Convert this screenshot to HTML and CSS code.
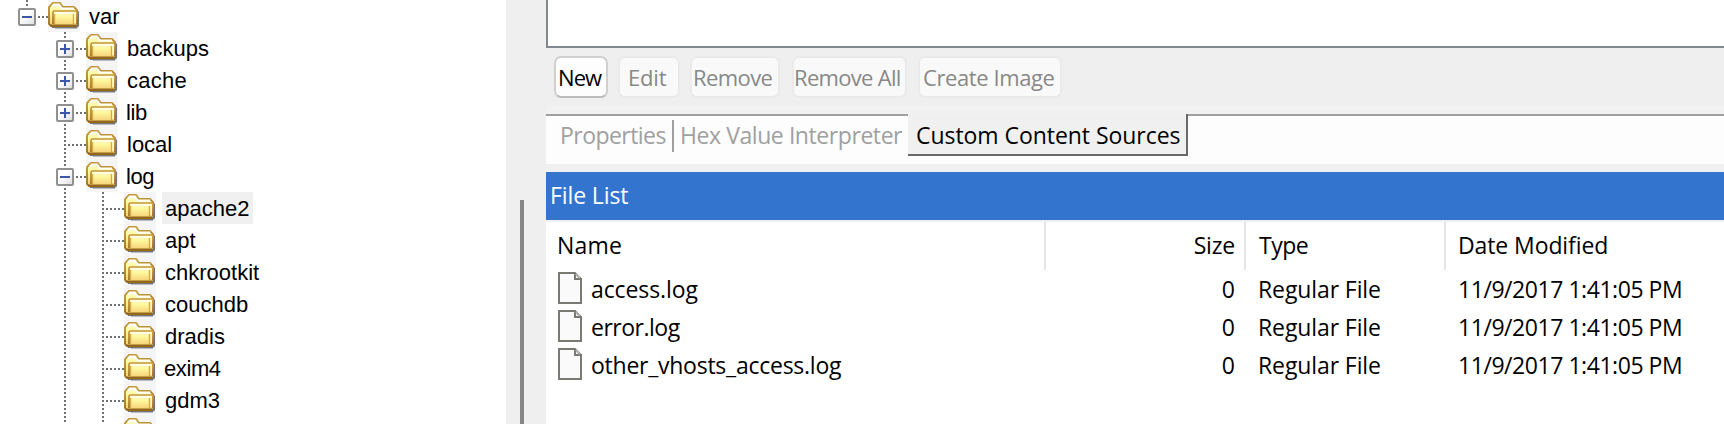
FILE: index.html
```html
<!DOCTYPE html>
<html lang="en">
<head>
<meta charset="utf-8">
<title>File List</title>
<link rel="stylesheet" href="styles.css">
</head>
<body>
<svg class="defs" width="0" height="0">
  <defs>
    <linearGradient id="gold" x1="0" y1="0" x2="0" y2="1"><stop offset="0" stop-color="#fffdd0"/><stop offset=".4" stop-color="#fff69b"/><stop offset="1" stop-color="#f3cc76"/></linearGradient>
    <linearGradient id="rim" x1="0" y1="0" x2="0" y2="1"><stop offset="0" stop-color="#c39a3c"/><stop offset="1" stop-color="#956a1c"/></linearGradient>
    <linearGradient id="knob" x1="0" y1="0" x2="1" y2="1"><stop offset=".4" stop-color="#fff"/><stop offset="1" stop-color="#dcdcdc"/></linearGradient>
    <symbol id="folder" viewBox="0 0 32 32">
      <path d="M4 26v2h25l2-2V12l-2-2z" fill="#777"/>
      <path d="M7 28.500h22" stroke="#bbb" stroke-width="1"/>
      <path d="M1 24V7l2-2 2-2h7l3 4h11l3 3v14l-2 2H3z" fill="url(#gold)" stroke="url(#rim)" stroke-width="1.800"/>
      <path d="M4 6.500l2-2h5l3 4h12" fill="none" stroke="#fff" stroke-width="1.800"/>
      <path d="M5 24V12l1-1h22l1 1v12l-2 2H6z" fill="url(#gold)"/>
      <path d="M5 24V12l1-1h22l1 1v12" fill="none" stroke="url(#rim)" stroke-width="1.700"/>
      <path d="M6.500 14v10M25.500 14v10" stroke="#dba842" stroke-width="1.400"/>
      <path d="M7 13h20" stroke="#fffde8" stroke-width="1.600"/>
      <path d="M27.200 14v9" stroke="#fffbc0" stroke-width="1.600"/>
      <path d="M3 25.500h25" stroke="#94681a" stroke-width="2"/>
    </symbol>
    <symbol id="plus" viewBox="0 0 18 18"><rect x="1" y="1" width="16" height="16" rx="1" fill="url(#knob)" stroke="#919191" stroke-width="2"/><path d="M4 9h10M9 4v10" stroke="#3c57a8" stroke-width="2"/></symbol>
    <symbol id="minus" viewBox="0 0 18 18"><rect x="1" y="1" width="16" height="16" rx="1" fill="url(#knob)" stroke="#919191" stroke-width="2"/><path d="M4 9h10" stroke="#3c57a8" stroke-width="2"/></symbol>
    <symbol id="page" viewBox="0 0 24 32"><path d="M1 1h16l6 6v24H1z" fill="#fafafa"/><path d="M17 1H1v30h22V7h-6V1l6 6" fill="none" stroke="#7a7a75" stroke-width="2"/><path d="M18 0h6v6z" fill="#fff"/><path d="M18 2l4 4" stroke="#b5b5b0" stroke-width="2"/></symbol>
  </defs>
</svg>
<div class="app">
  <nav class="tree">
    <div class="node"><span class="cell start"><i class="v top"></i><i class="h right"></i><svg class="box"><use href="#minus"/></svg></span><svg class="folder"><use href="#folder"/></svg><span class="label">var</span></div>
    <div class="node"><span class="pad"></span><span class="cell"><i class="v"></i><i class="h right"></i><svg class="box"><use href="#plus"/></svg></span><svg class="folder"><use href="#folder"/></svg><span class="label">backups</span></div>
    <div class="node"><span class="pad"></span><span class="cell"><i class="v"></i><i class="h right"></i><svg class="box"><use href="#plus"/></svg></span><svg class="folder"><use href="#folder"/></svg><span class="label wide">cache</span></div>
    <div class="node"><span class="pad"></span><span class="cell"><i class="v"></i><i class="h right"></i><svg class="box"><use href="#plus"/></svg></span><svg class="folder"><use href="#folder"/></svg><span class="label tight">lib</span></div>
    <div class="node"><span class="pad"></span><span class="cell"><i class="v"></i><i class="h"></i></span><svg class="folder"><use href="#folder"/></svg><span class="label">local</span></div>
    <div class="node"><span class="pad"></span><span class="cell"><i class="v"></i><i class="h right"></i><svg class="box"><use href="#minus"/></svg></span><svg class="folder"><use href="#folder"/></svg><span class="label tight">log</span></div>
    <div class="node"><span class="pad"></span><span class="cell"><i class="v"></i></span><span class="cell"><i class="v"></i><i class="h"></i></span><svg class="folder"><use href="#folder"/></svg><span class="label selected">apache2</span></div>
    <div class="node"><span class="pad"></span><span class="cell"><i class="v"></i></span><span class="cell"><i class="v"></i><i class="h"></i></span><svg class="folder"><use href="#folder"/></svg><span class="label">apt</span></div>
    <div class="node"><span class="pad"></span><span class="cell"><i class="v"></i></span><span class="cell"><i class="v"></i><i class="h"></i></span><svg class="folder"><use href="#folder"/></svg><span class="label">chkrootkit</span></div>
    <div class="node"><span class="pad"></span><span class="cell"><i class="v"></i></span><span class="cell"><i class="v"></i><i class="h"></i></span><svg class="folder"><use href="#folder"/></svg><span class="label">couchdb</span></div>
    <div class="node"><span class="pad"></span><span class="cell"><i class="v"></i></span><span class="cell"><i class="v"></i><i class="h"></i></span><svg class="folder"><use href="#folder"/></svg><span class="label">dradis</span></div>
    <div class="node"><span class="pad"></span><span class="cell"><i class="v"></i></span><span class="cell"><i class="v"></i><i class="h"></i></span><svg class="folder"><use href="#folder"/></svg><span class="label tight">exim4</span></div>
    <div class="node"><span class="pad"></span><span class="cell"><i class="v"></i></span><span class="cell"><i class="v"></i><i class="h"></i></span><svg class="folder"><use href="#folder"/></svg><span class="label">gdm3</span></div>
    <div class="node"><span class="pad"></span><span class="cell"><i class="v"></i></span><span class="cell"><i class="v"></i><i class="h"></i></span><svg class="folder"><use href="#folder"/></svg><span class="label">glusterfs</span></div>
  </nav>
  <div class="scrollbar"><div class="thumb"></div></div>
  <main class="main">
    <div class="sources"></div>
    <div class="toolbar">
      <button class="btn new">New</button>
      <button class="btn edit" disabled>Edit</button>
      <button class="btn remove" disabled>Remove</button>
      <button class="btn remove-all" disabled>Remove All</button>
      <button class="btn create" disabled>Create Image</button>
    </div>
    <div class="tabs">
      <span class="tab props">Properties</span>
      <span class="tab hex">Hex Value Interpreter</span>
      <span class="tab active">Custom Content Sources</span>
      <span class="tab rest"></span>
    </div>
    <div class="title">File List</div>
    <div class="row head"><span class="name">Name</span><span class="size">Size</span><span class="type">Type</span><span class="date">Date Modified</span></div>
    <div class="row"><span class="name"><svg class="page"><use href="#page"/></svg><span class="f1">access.log</span></span><span class="size">0</span><span class="type">Regular File</span><span class="date">11/9/2017 1:41:05 PM</span></div>
    <div class="row"><span class="name"><svg class="page"><use href="#page"/></svg><span class="f2">error.log</span></span><span class="size">0</span><span class="type">Regular File</span><span class="date">11/9/2017 1:41:05 PM</span></div>
    <div class="row"><span class="name"><svg class="page"><use href="#page"/></svg><span class="f3">other_vhosts_access.log</span></span><span class="size">0</span><span class="type">Regular File</span><span class="date">11/9/2017 1:41:05 PM</span></div>
    <div class="fill"></div>
  </main>
</div>
</body>
</html>
```

FILE: styles.css
```css
* { box-sizing: border-box; }
body { margin: 0; overflow: hidden; background: #fff; color: #000; font: 23px "Open Sans", sans-serif; }
.defs { position: absolute; }
.app { display: flex; width: 1724px; height: 424px; overflow: hidden; white-space: nowrap; }

/* Directory tree */
.tree { width: 506px; height: 424px; overflow: hidden; font: 22px/34px "Liberation Sans", Arial, sans-serif; }
.node { display: flex; height: 32px; }
.pad { width: 48px; }
.cell { position: relative; width: 38px; height: 32px; }
.cell.start { width: 38px; margin-left: 10px; }
.v, .h { position: absolute; }
.v { left: 16px; top: 0; width: 2px; height: 32px; background: repeating-linear-gradient(#707070 0 2px, transparent 2px 4px); }
.v.top { height: 8px; }
.h { left: 16px; top: 16px; width: 22px; height: 2px; background: repeating-linear-gradient(90deg, #707070 0 2px, transparent 2px 4px); }
.h.right { left: 28px; width: 10px; }
.box { position: absolute; left: 8px; top: 8px; width: 18px; height: 18px; background: #fff; }
.folder { width: 32px; height: 32px; background: #f5f5f5; }
.label { height: 32px; margin-left: 6px; padding: 0 4px 0 3px; letter-spacing: 0; }
.tight { padding-left: 2px; letter-spacing: -0.4px; }
.wide { letter-spacing: .25px; }
.selected { background: #f0f0f0; }

.scrollbar { width: 40px; padding: 200px 0 0 14px; background: #efefef; }
.thumb { width: 4px; height: 224px; background: #868686; }

/* Right pane */
.main { display: flex; flex-direction: column; width: 1178px; height: 424px; background: #f0f0f0; }
.sources { height: 48px; background: #fff; border: solid #828790; border-width: 0 0 2px 2px; }
.toolbar { display: flex; height: 66px; padding: 8px; background: linear-gradient(#efefef 58px, #f1f1f1 58px); }
.btn { height: 42px; padding: 0; border: 2px solid #d0d0d0; border-bottom-color: #bcbcbc; border-radius: 7px; background: #fdfdfd; color: #000; font: 22px/38px "Open Sans", sans-serif; text-align: left; white-space: nowrap; }
.btn:disabled { border-color: #eaeaea; background: #f9f9f9; color: #888; }
.new { width: 54px; padding-left: 2px; letter-spacing: -0.9px; }
.edit { width: 62px; margin-left: 10px; padding-left: 8px; letter-spacing: -0.2px; }
.remove { width: 90px; margin-left: 10px; padding-left: 1px; letter-spacing: -0.6px; }
.remove-all { width: 115px; margin-left: 12px; letter-spacing: -0.7px; }
.create { width: 144px; margin-left: 11px; padding-left: 3px; letter-spacing: -0.4px; }

.tabs { display: flex; height: 50px; background: #fdfdfd; margin-bottom: 8px; }
.tab { border-top: 2px solid #a0a0a0; line-height: 38px; color: #a0a0a0; }
.props { width: 128px; padding-left: 14px; letter-spacing: -0.55px; background: linear-gradient(#a0a0a0, #a0a0a0) 126px 4px / 2px 32px no-repeat; }
.hex { width: 234px; padding-left: 6px; letter-spacing: -0.43px; }
.active { width: 280px; height: 42px; padding-left: 8px; border: solid #696969; border-width: 0 2px 2px 0; background: #f0f0f0; color: #000; line-height: 42px; letter-spacing: -0.05px; }
.rest { flex: 1; }

.title { height: 48px; padding-left: 4px; background: #3374cf; color: #fff; line-height: 46px; letter-spacing: -0.1px; margin-bottom: 2px; }
.row { display: grid; grid-template-columns: 500px 200px 200px 1fr; height: 38px; line-height: 38px; background: #fff; }
.head { height: 48px; line-height: 46px; }
.head > :not(.date) { border-right: 2px solid #e5e5e5; }
.name { display: flex; padding-left: 12px; }
.head .name { padding-left: 11px; letter-spacing: .2px; }
.page { width: 24px; height: 32px; margin: 2px 9px 0 0; }
.size { padding-right: 11px; text-align: right; }
.head .size { padding-right: 9px; letter-spacing: -0.2px; }
.type { padding-left: 12px; letter-spacing: -0.1px; }
.head .type { padding-left: 13px; letter-spacing: -0.5px; }
.date { padding-left: 12px; letter-spacing: -0.45px; }
.head .date { padding-left: 12px; letter-spacing: -0.1px; }
.f1 { letter-spacing: -0.1px; }
.f2 { letter-spacing: -0.5px; }
.f3 { letter-spacing: -0.25px; }
.fill { flex: 1; background: #fff; }
```
